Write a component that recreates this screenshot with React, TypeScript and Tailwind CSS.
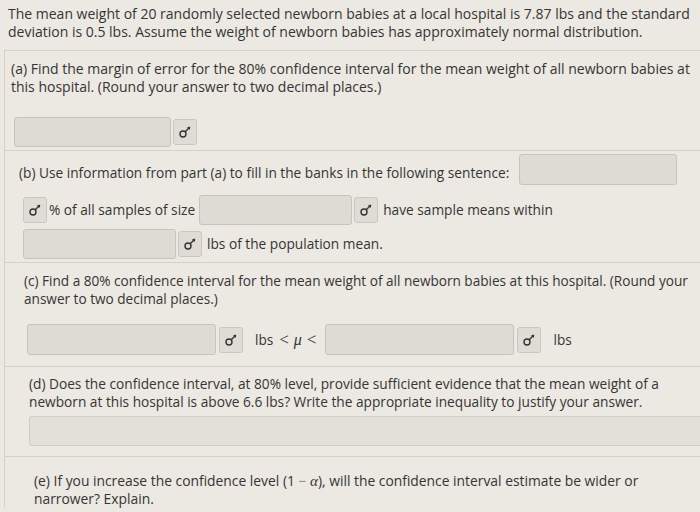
import React from 'react';

function MathIcon() {
  return (
    <div className="flex h-[26px] w-[24px] shrink-0 items-center justify-center rounded-[3px] border border-[#c9c7bf] bg-[#dedcd4]">
      <svg width="14" height="14" viewBox="0 0 14 14" fill="none" stroke="#333" strokeWidth="1.4">
        <circle cx="5" cy="9" r="3" />
        <path d="M7.2 6.8 L11 3" />
        <path d="M9.5 2.6 L11.6 2.4 L11.4 4.5" strokeWidth="1.1" />
      </svg>
    </div>
  );
}

function Blank({ w, h = 'h-[30px]' }: { w: string; h?: string }) {
  return <div className={`${w} ${h} shrink-0 rounded-[3px] border border-[#c6c4bc] bg-[#dddbd3]`} />;
}

const serif = { fontFamily: '"Liberation Serif", serif' };

export default function App() {
  return (
    <div
      className="h-[512px] w-[700px] overflow-hidden whitespace-nowrap bg-[#ebe9e1] text-[14px] leading-[18px] text-[#353535]"
      style={{ fontFamily: '"Open Sans", Lato, sans-serif' }}
    >
      {/* Intro */}
      <div className="px-[8px] pt-[5px] pb-[9px]">
        The mean weight of 20 randomly selected newborn babies at a local hospital is 7.87 lbs and the standard
        <br />
        deviation is 0.5 lbs. Assume the weight of newborn babies has approximately normal distribution.
      </div>

      <div className="ml-[4px] border-l border-[#d3d1c9]">
        {/* (a) */}
        <section className="h-[100px] border-t border-[#d3d1c9] pl-[6px] pt-[9px]">
          <p>
            (a) Find the margin of error for the 80% confidence interval for the mean weight of all newborn babies at
            <br />
            this hospital. (Round your answer to two decimal places.)
          </p>
          <div className="mt-[21px] flex items-center gap-[2px] pl-[3px]">
            <Blank w="w-[157px]" />
            <MathIcon />
          </div>
        </section>

        {/* (b) */}
        <section className="h-[112px] border-t border-[#d3d1c9] pl-[14px] pt-[3px] text-[13.7px]">
          <div className="flex items-center">
            <span className="pt-[6px]">(b) Use information from part (a) to fill in the banks in the following sentence:</span>
            <div className="ml-[10px]">
              <Blank w="w-[158px]" h="h-[31px]" />
            </div>
          </div>
          <div className="mt-[10px] flex items-center">
            <div className="ml-[4px]">
              <MathIcon />
            </div>
            <span className="ml-[2px]">% of all samples of size</span>
            <div className="ml-[4px]">
              <Blank w="w-[153px]" />
            </div>
            <div className="ml-[2px]">
              <MathIcon />
            </div>
            <span className="ml-[5px]">have sample means within</span>
          </div>
          <div className="mt-[4px] flex items-center">
            <div className="ml-[4px]">
              <Blank w="w-[153px]" />
            </div>
            <div className="ml-[2px]">
              <MathIcon />
            </div>
            <span className="ml-[5px]">lbs of the population mean.</span>
          </div>
        </section>

        {/* (c) */}
        <section className="h-[104px] border-t border-[#d3d1c9] pl-[19px] pt-[9px] text-[13.6px]">
          <p>
            (c) Find a 80% confidence interval for the mean weight of all newborn babies at this hospital. (Round your
            <br />
            answer to two decimal places.)
          </p>
          <div className="mt-[16px] flex items-center pl-[3px]">
            <Blank w="w-[189px]" h="h-[31px]" />
            <div className="ml-[3px]">
              <MathIcon />
            </div>
            <span className="ml-[12px] flex items-center">
              lbs
              <span className="ml-[6px] text-[17px]" style={serif}>&lt;</span>
              <span className="ml-[5px] text-[16px] italic" style={serif}>μ</span>
              <span className="ml-[5px] text-[17px]" style={serif}>&lt;</span>
            </span>
            <div className="ml-[9px]">
              <Blank w="w-[189px]" h="h-[31px]" />
            </div>
            <div className="ml-[3px]">
              <MathIcon />
            </div>
            <span className="ml-[12px]">lbs</span>
          </div>
        </section>

        {/* (d) */}
        <section className="h-[90px] border-t border-[#d3d1c9] pl-[24px] pt-[8px] text-[13.7px]">
          <p>
            (d) Does the confidence interval, at 80% level, provide sufficient evidence that the mean weight of a
            <br />
            newborn at this hospital is above 6.6 lbs? Write the appropriate inequality to justify your answer.
          </p>
          <div className="mt-[5px] h-[30px] rounded-l-[3px] border border-r-0 border-[#cfcdc5] bg-[#e2e0d8]" />
        </section>

        {/* (e) */}
        <section className="border-t border-[#d3d1c9] pl-[29px] pt-[15px] text-[13.85px]">
          <p>
            (e) If you increase the confidence level (1 <span className="text-[#888]">−</span>{' '}
            <span className="text-[15px] italic" style={serif}>α</span>), will the confidence interval estimate be wider or
            <br />
            narrower? Explain.
          </p>
        </section>
      </div>
    </div>
  );
}
